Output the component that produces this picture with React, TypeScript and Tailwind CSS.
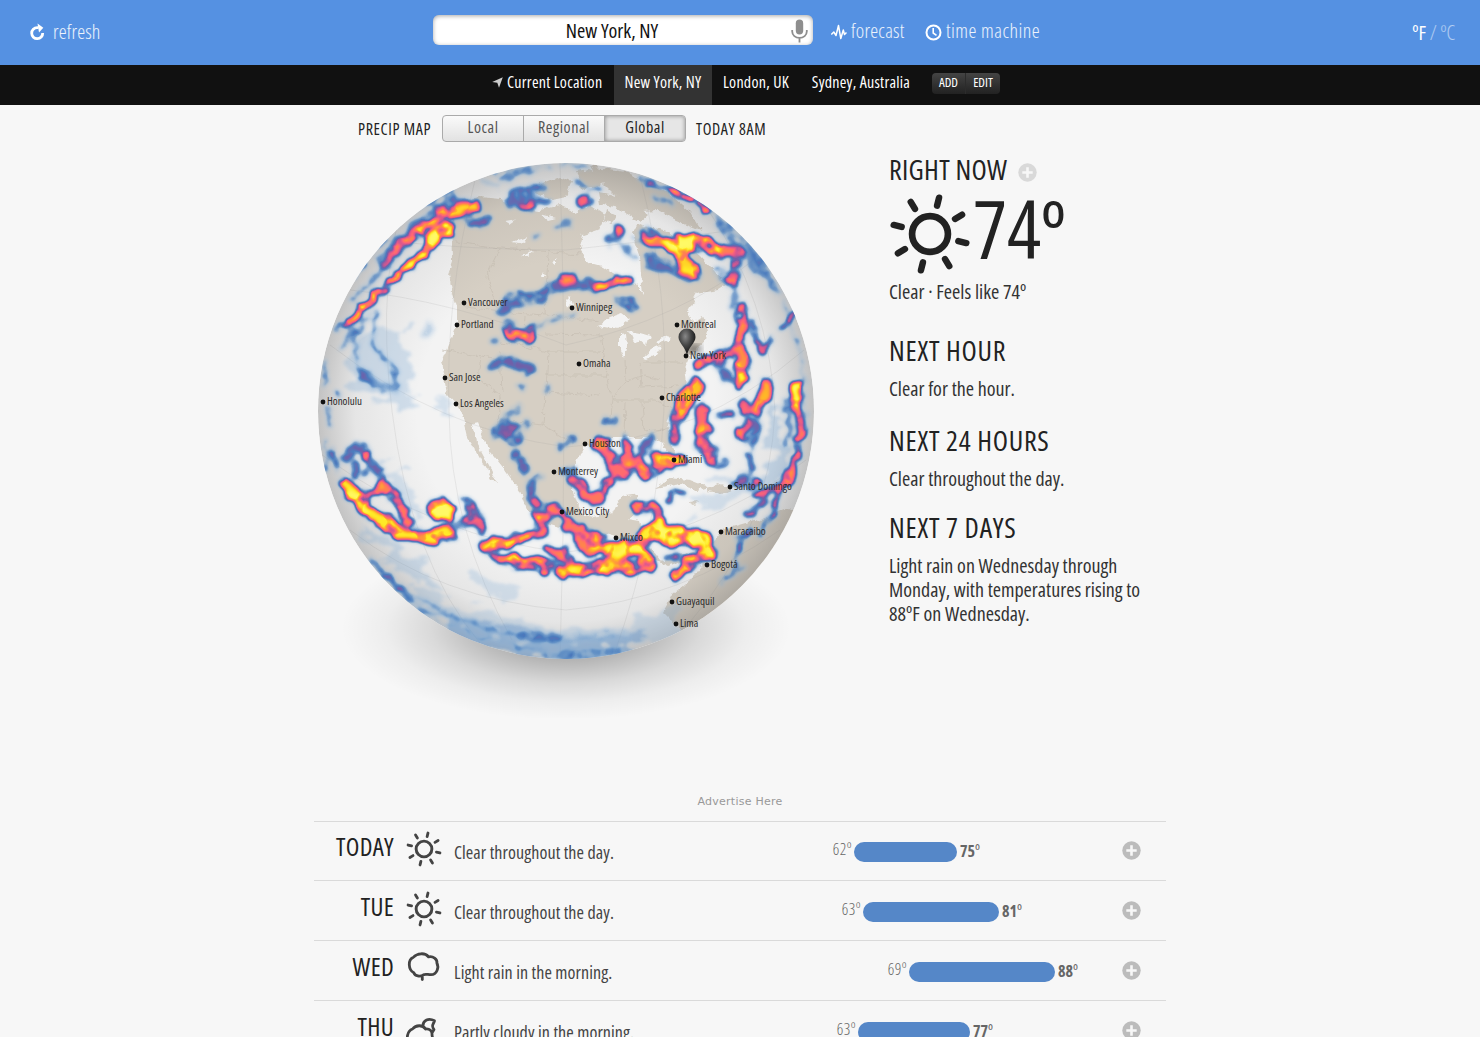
import { Fragment } from "react";
import clsx from "clsx";

type IconName = "clear" | "rain" | "partly-cloudy";

interface IDay {
  name: string;
  icon: IconName;
  summary: string;
  low: number;
  high: number;
  offset: number;
  width: number;
}

// offset and width place the temperature bar inside its 300px track
const days: IDay[] = [
  { name: "TODAY", icon: "clear", summary: "Clear throughout the day.", low: 62, high: 75, offset: 54, width: 103 },
  { name: "TUE", icon: "clear", summary: "Clear throughout the day.", low: 63, high: 81, offset: 63, width: 136 },
  { name: "WED", icon: "rain", summary: "Light rain in the morning.", low: 69, high: 88, offset: 109, width: 146 },
  { name: "THU", icon: "partly-cloudy", summary: "Partly cloudy in the morning.", low: 63, high: 77, offset: 58, width: 112 },
];

const cities: [string, number, number][] = [
  ["Vancouver", 464, 303], ["Portland", 457, 325], ["San Jose", 445, 378], ["Los Angeles", 456, 404],
  ["Honolulu", 323, 402], ["Winnipeg", 572, 308], ["Montreal", 677, 325], ["Omaha", 579, 364],
  ["New York", 686, 356], ["Charlotte", 662, 398], ["Houston", 585, 444], ["Miami", 674, 460],
  ["Monterrey", 554, 472], ["Mexico City", 562, 512], ["Mixco", 616, 538], ["Santo Domingo", 730, 487],
  ["Maracaibo", 721, 532], ["Bogotá", 707, 565], ["Guayaquil", 672, 602], ["Lima", 676, 624],
];

// storm tracks: path, stroke width, intensity
const tracks: [string, number, number][] = [
  // north pacific
  ["M336 331L352 319L385 287Q418 257 436 241", 6, 1],
  ["M432 241Q440 230 449 230", 12, 1],
  ["M385 262Q410 230 440 213Q458 205 474 206", 15, 0.34],
  ["M413 236Q430 219 448 213Q460 206 474 207", 8, 0.78],
  ["M395 250L420 228", 5, 0.74],
  ["M432 207L452 198M400 245L388 258M425 202L450 190", 4, 0.5],
  ["M464 213L474 222L488 222", 8, 0.42],
  ["M384 268L408 240M352 300L380 272", 6, 0.27],
  ["M377 313Q366 345 382 358Q398 368 396 385", 5, 0.32],
  ["M364 318Q350 345 358 370L372 388", 5, 0.28],
  ["M354 325L340 350M372 312L350 340", 4, 0.25],
  ["M425 335L430 325", 7, 0.13],
  ["M362 372L378 385L398 388", 8, 0.2],
  // arctic
  ["M507 203L524 200L545 201M515 194L540 186", 9, 0.36],
  ["M521 206L532 207", 6, 0.6],
  ["M576 184L586 189L600 190", 5, 0.4],
  ["M581 203L588 200", 8, 0.6],
  ["M556 226L570 224M533 238L537 236", 6, 0.26],
  ["M490 172L550 167M500 180L530 170M560 166L590 168", 4, 0.28],
  // canada
  ["M504 309L512 300L535 300L556 288L575 282L600 287", 11, 0.38],
  ["M562 279L573 279", 9, 0.6],
  ["M598 287Q613 279 629 281", 8, 0.92],
  ["M619 297L624 304L634 306", 7, 0.4],
  ["M508 326L515 336L529 333", 12, 0.46],
  ["M510 333L528 335", 7, 0.66],
  ["M530 331L548 320L576 313", 5, 0.24],
  ["M495 364L501 359", 9, 0.38],
  ["M510 359L516 365L530 369", 11, 0.4],
  ["M548 386L548 392M521 386L523 388M493 345L498 342", 5, 0.28],
  ["M610 240L620 233", 10, 0.38],
  ["M617 229L619 230", 8, 0.6],
  ["M630 237L638 243M620 245L636 258", 5, 0.28],
  ["M648 238L670 243Q700 236 722 252L737 254L733 280", 11, 0.68],
  ["M672 245Q690 238 712 247", 14, 0.98],
  ["M680 248L684 262L692 270", 13, 0.86],
  ["M648 260L675 270L695 275", 11, 0.36],
  ["M646 231L650 236", 9, 0.42],
  ["M718 268L733 290L736 312", 7, 0.24],
  // west atlantic
  ["M742 310Q744 330 738 348Q750 360 742 372L738 385", 9, 0.72],
  ["M738 362L740 378", 6, 0.95],
  ["M752 325Q756 345 763 353L770 342", 6, 0.68],
  ["M778 327Q792 325 793 312", 5, 0.64],
  ["M697 365L707 360", 10, 0.72],
  ["M678 416Q686 395 697 386", 14, 0.82],
  ["M674 420L675 440M718 358L728 352", 9, 0.56],
  ["M702 410L704 428L699 438L707 452L712 462", 10, 0.62],
  ["M700 432L706 428", 11, 0.54],
  ["M725 372L728 380M718 366L726 356", 7, 0.38],
  ["M744 405L746 412M757 410L762 398L765 385M741 432L748 424", 9, 0.6],
  ["M754 408L766 395L768 382M723 415L733 418M738 433L740 438", 7, 0.5],
  ["M748 440L754 445L758 422M716 450L717 454M722 463L724 464", 7, 0.38],
  ["M748 455L754 468L745 478L734 484", 7, 0.44],
  ["M794 384L797 403L801 430Q796 462 789 483", 6, 0.7],
  ["M797 385L797 402", 9, 1],
  ["M790 400L787 445M782 412L785 402", 6, 0.3],
  ["M789 470L778 495L773 515M756 498L785 482M750 490L756 482", 6, 0.64],
  ["M748 515L765 500M760 535L770 518M735 540L750 528L740 550", 5, 0.52],
  ["M722 582L745 565M733 568L738 552", 4, 0.38],
  ["M804 390L806 430M782 300Q800 340 806 380", 2.5, 0.35],
  // gulf and caribbean
  ["M598 446L612 460L618 476L636 462L650 474L662 462L678 460", 12, 0.62],
  ["M626 440L627 462M644 468L647 478", 8, 0.62],
  ["M655 455L672 462L682 460", 9, 0.75],
  ["M640 455L650 440", 8, 0.4],
  ["M601 440L605 442", 9, 0.68],
  ["M573 478L582 488L592 500L604 496L607 482", 9, 0.66],
  ["M605 424L614 420M562 446L575 438M562 472L572 470", 7, 0.36],
  ["M668 500Q667 490 682 492", 6, 0.6],
  ["M636 508L655 506L663 525", 8, 0.76],
  // mexico
  ["M498 432L505 425", 10, 0.38],
  ["M508 438L518 438L514 428", 11, 0.42],
  ["M510 414L519 408M526 424L527 426", 7, 0.24],
  ["M514 455L520 455L523 470M531 487L534 502", 9, 0.38],
  ["M536 480L540 478M531 500L548 510", 8, 0.3],
  // tropical belt
  ["M536 515L542 530L532 535L484 546L498 560L522 562", 9, 0.7],
  ["M487 547L508 542L528 538", 8, 0.78],
  ["M515 560L545 566L566 572L600 567", 11, 0.88],
  ["M540 520L558 510L570 525L592 535", 10, 0.66],
  ["M548 550L560 552L572 568M577 540L590 552L602 540", 8, 0.7],
  ["M592 540L612 558L640 548", 10, 0.72],
  ["M612 550L640 544L650 530L674 534L704 540", 14, 0.92],
  ["M602 566L625 568L650 566L642 552", 11, 0.86],
  ["M676 575L686 564L700 556L710 552", 10, 0.88],
  ["M660 524L668 542L700 536", 11, 0.88],
  ["M706 540L712 553", 9, 0.64],
  ["M680 556L668 560", 6, 0.5],
  // central pacific
  ["M347 485L362 507L385 522L402 535L425 538L450 533", 11, 0.9],
  ["M354 497L366 500L362 492L378 494L382 478", 7, 0.7],
  ["M350 495L366 510", 8, 0.86],
  ["M385 488L398 502L410 523", 8, 0.68],
  ["M439 508L447 512", 17, 1],
  ["M450 526L468 524", 9, 0.26],
  ["M466 501L474 514L482 530M470 520L478 518", 8, 0.58],
  ["M348 458L353 447L364 450L371 463L380 474", 7, 0.4],
  ["M355 464L355 473M365 453L367 459", 6, 0.5],
  ["M365 473L365 474", 7, 0.36],
  ["M333 453L339 472M329 405L331 422", 5, 0.54],
  ["M325 440L328 470", 2.5, 0.5],
  ["M337 390L338 396M326 360L324 385", 3, 0.46],
  // southern rim and limb
  ["M372 560L415 605", 3, 0.52],
  ["M398 585Q440 615 500 632L560 640", 5, 0.24],
  ["M420 610Q480 645 560 652L620 650", 4, 0.28],
  ["M520 635L560 640L625 634", 10, 0.14],
  ["M540 657L600 657", 3, 0.4],
  ["M640 180L667 190", 4, 0.7],
  ["M670 189Q690 197 707 210", 5, 0.95],
  ["M710 212Q745 236 768 272", 5, 0.34],
  ["M720 226L772 285M750 262L778 292", 6, 0.3],
  ["M656 197L672 204", 5, 0.28],
  ["M356 274Q390 222 440 190", 2.5, 0.56],
];

// wide light-blue drizzle
const drizzle: [string, number][] = [
  ["M378 328L400 330L412 352L408 385L420 400L395 412L350 385L355 340Z", 0.11],
  ["M385 455L400 470L410 490L425 505L420 515L400 500L388 480Z", 0.1],
  ["M355 525L385 540L410 550L425 565L440 590L420 590L390 565Z", 0.11],
  ["M475 575L500 582L515 590L505 600L480 592Z", 0.1],
  ["M395 585L450 600L520 622L600 628L650 612L690 605L680 640L560 665L450 640Z", 0.1],
  ["M430 610L500 632L600 640L650 628L640 650L560 665L450 640Z", 0.07],
  ["M700 490L730 480L748 490L720 508L690 515Z", 0.1],
  ["M770 415L785 410L787 470L765 500L745 495L765 465Z", 0.12],
  ["M480 180L500 183L498 195L480 190Z", 0.11],
  ["M440 395L448 403L445 412L432 405Z", 0.1],
];

const land = [
  // north america
  "M452 212L462 200L480 197L500 199L515 207L540 210L560 205L575 212L590 205L605 215L598 230L583 235L580 248L588 262L602 266L622 280L636 284L643 294L641 275L640 255L632 232L640 224L650 228L668 232L682 240L700 255L712 268L726 285L718 290L697 294L688 311L692 322L702 316L707 330L705 342L690 355L685 368L687 385L674 408L667 424L674 450L672 460L663 444L653 437L613 437L593 440L580 453L575 467L573 490L580 513L593 517L613 513L620 498L640 495L636 513L628 520L640 522L645 540L660 560L672 556L693 552L712 560L704 566L690 558L668 566L650 557L627 544L610 535L583 532L557 527L540 522L527 510L520 492L505 470L487 447L478 423L473 424L477 443L490 467L498 483L491 479L477 453L467 437L462 415L457 405L448 395L442 362L457 325L457 307L452 292L449 274L453 262Z",
  // arctic islands
  "M540 184L560 176L572 182L566 196L548 200L536 194ZM575 172L590 170L604 176L600 188L584 190ZM598 192L622 196L648 215L640 222L618 208L600 204ZM606 210L616 215L612 224L604 220Z",
  // greenland
  "M590 166L625 172L665 190L690 212L701 230L676 220L658 210L640 211L612 192L600 180Z",
  // caribbean
  "M655 488L670 478L690 480L708 487L698 490L680 484ZM706 488L718 483L734 488L722 495L708 492ZM688 502L698 501L694 505Z",
  // south america
  "M704 562L712 545L722 530L742 524L768 517L790 508L800 520L770 590L720 630L684 634L672 621L663 612L673 594L690 580Z",
];

const water = [
  "M598 327L610 317L622 313L630 319L618 328L606 326Z",
  "M620 335L626 334L627 348L624 358L620 350Z",
  "M629 331L640 333L650 336L647 346L640 340L634 342Z",
  "M643 358L652 350L661 346L656 354L646 359Z",
  "M656 342L668 336L671 339L660 344Z",
  "M505 221L517 219L510 224ZM512 242L528 237L524 244ZM520 256L534 251L528 256ZM541 277L543 272L545 277ZM552 263L556 258L556 266ZM566 300L570 296L573 306L568 308ZM540 214L556 218L548 220Z",
];

const borders =
  "M460 306L500 312L560 316L598 322M456 242L500 248L580 254M500 249L487 275L498 311M548 253L545 315M525 316L523 345L500 342M523 346L548 352L600 352M545 334L600 335M548 352L546 392L600 395M545 375L610 375M600 335L606 375L612 400L609 425M442 350L480 356L477 378L500 395L498 424M500 352L502 392M480 356L523 362M545 392L543 425L500 420M543 425L575 445M625 360L626 382L612 398M640 362L642 388L680 386M612 400L655 400L672 408M625 402L624 436M642 402L644 430L664 428M626 382L645 376L660 380M645 362L684 362M690 340L692 320";

const graticule =
  "M410 187Q375 270 392 411Q410 560 480 643M475 180Q445 300 449 411Q450 530 512 640M560 163Q568 411 560 659M640 176Q700 411 615 652M705 205Q770 300 775 411Q770 530 690 622M330 345Q440 430 566 447Q700 440 804 350M350 290Q450 300 566 345Q680 320 760 255M322 455Q440 540 566 552Q700 540 806 460M350 530Q440 600 566 610Q680 600 780 530M380 240Q470 250 566 250Q660 240 735 230";

const Storms = () => (
  <Fragment>
    <g filter="url(#precip-soft)">
      {drizzle.map(([d, level]) => (
        <path key={d} d={d} fill="#fff" fillOpacity={level} />
      ))}
    </g>
    <g filter="url(#precip)" fill="none" stroke="#fff" strokeLinecap="round" strokeLinejoin="round">
      {tracks.map(([d, width, level]) => (
        <path key={d} d={d} strokeWidth={width > 6 ? width + 1.5 : width} strokeOpacity={level} />
      ))}
    </g>
  </Fragment>
);

// maps rain intensity (alpha) to the blue / pink / yellow scale
const ColorScale = () => (
  <Fragment>
    <feColorMatrix type="matrix" values="0 0 0 1 0  0 0 0 1 0  0 0 0 1 0  0 0 0 1 0" />
    <feComponentTransfer>
      <feFuncR type="table" tableValues="0.6 0.5 0.32 0.27 0.45 0.85 1 1 1 1 1" />
      <feFuncG type="table" tableValues="0.75 0.68 0.53 0.47 0.37 0.34 0.4 0.52 0.72 0.92 0.98" />
      <feFuncB type="table" tableValues="0.9 0.85 0.77 0.74 0.66 0.56 0.46 0.3 0.15 0.15 0.4" />
      <feFuncA type="table" tableValues="0 0.25 0.7 0.95 1 1 1 1 1 1 1" />
    </feComponentTransfer>
  </Fragment>
);

const Globe = () => (
  <svg width="504" height="576" viewBox="314 142 504 576" className="block" colorInterpolationFilters="sRGB">
    <defs>
      <clipPath id="disc">
        <circle cx="566" cy="411" r="248" />
      </clipPath>
      <radialGradient id="shade" cx="0.5" cy="0.5" r="0.5">
        <stop offset="0.6" stopColor="#6b6b6b" stopOpacity="0" />
        <stop offset="0.85" stopColor="#6b6b6b" stopOpacity="0.1" />
        <stop offset="1" stopColor="#5c5c5c" stopOpacity="0.32" />
      </radialGradient>
      <radialGradient id="shadow">
        <stop offset="0" stopColor="#000" stopOpacity="0.4" />
        <stop offset="0.3" stopColor="#000" stopOpacity="0.3" />
        <stop offset="0.6" stopColor="#000" stopOpacity="0.12" />
        <stop offset="0.8" stopColor="#000" stopOpacity="0.04" />
        <stop offset="1" stopColor="#000" stopOpacity="0" />
      </radialGradient>
      <radialGradient id="pin" cx="0.4" cy="0.3" r="0.7">
        <stop offset="0" stopColor="#888" />
        <stop offset="0.5" stopColor="#444" />
        <stop offset="1" stopColor="#111" />
      </radialGradient>
      <filter id="precip" filterUnits="userSpaceOnUse" x="300" y="150" width="530" height="530">
        <feTurbulence type="fractalNoise" baseFrequency="0.08" numOctaves="3" seed="4" result="noise" />
        <feDisplacementMap in="SourceGraphic" in2="noise" scale="13" xChannelSelector="R" yChannelSelector="G" />
        <feGaussianBlur stdDeviation="1.9" result="rain" />
        <feTurbulence type="fractalNoise" baseFrequency="0.075" numOctaves="2" seed="11" />
        <feColorMatrix type="matrix" values="0 0 0 0 1  0 0 0 0 1  0 0 0 0 1  1.7 0 0 0 0.08" result="cells" />
        <feComposite in="rain" in2="cells" operator="in" />
        <ColorScale />
      </filter>
      <filter id="precip-soft" filterUnits="userSpaceOnUse" x="300" y="150" width="530" height="530">
        <feTurbulence type="fractalNoise" baseFrequency="0.03 0.06" numOctaves="4" seed="9" result="noise" />
        <feDisplacementMap in="SourceGraphic" in2="noise" scale="40" xChannelSelector="R" yChannelSelector="G" />
        <feGaussianBlur stdDeviation="1.5" />
        <ColorScale />
      </filter>
      <filter id="coast" filterUnits="userSpaceOnUse" x="300" y="150" width="530" height="530">
        <feTurbulence type="fractalNoise" baseFrequency="0.12" numOctaves="3" seed="2" result="noise" />
        <feDisplacementMap in="SourceGraphic" in2="noise" scale="7" xChannelSelector="R" yChannelSelector="G" />
      </filter>
      <filter id="soft"><feGaussianBlur stdDeviation="3" /></filter>
    </defs>
    <ellipse cx="566" cy="628" rx="225" ry="92" fill="url(#shadow)" />
    <circle cx="566" cy="411" r="248" fill="#f3f3f3" />
    <g clipPath="url(#disc)">
      <g filter="url(#coast)">
        {land.map((d) => <path key={d} d={d} fill="#d6cfc4" />)}
        {water.map((d) => <path key={d} d={d} fill="#f3f3f3" />)}
        <path d={borders} fill="none" stroke="#c4bcb0" strokeWidth="0.6" />
      </g>
      <path d={graticule} fill="none" stroke="#999" strokeOpacity="0.2" strokeWidth="0.8" />
      <circle cx="566" cy="411" r="248" fill="url(#shade)" />
      <Storms />
    </g>
    <ellipse cx="694" cy="349" rx="8" ry="5" fill="#000" fillOpacity="0.4" filter="url(#soft)" />
    {cities.map(([name, x, y]) => (
      <g key={name}>
        <circle cx={x} cy={y} r="2.4" fill="#111" />
        <text x={x + 4} y={y + 3.2} className="text-[11px] font-stretch-[75%]" fill="#2b2b2b">{name}</text>
      </g>
    ))}
    <path d="M687 355C685 346 678.500 343 678.500 337A8.500 8.500 0 0 1 695.500 337C695.500 343 689 346 687 355Z" fill="url(#pin)" />
  </svg>
);

const Sun = ({ size }: { size: number }) => (
  <svg width={size} height={size} viewBox="-40 -40 80 80" fill="none" stroke="currentColor" strokeLinecap="round" className="shrink-0">
    <circle r="17.500" strokeWidth="6.500" />
    {[14, 59, 104, 149, 194, 239, 284, 329].map((angle) => (
      <path key={angle} d="M0 -28.500V-36.500" strokeWidth="6.300" transform={`rotate(${angle})`} />
    ))}
  </svg>
);

const WeatherIcon = ({ name }: { name: IconName }) => {
  if (name === "clear") return <Sun size={36} />;
  return (
    <svg width="36" height="36" viewBox="0 0 36 36" fill="none" stroke="currentColor" strokeWidth="2.800" strokeLinejoin="round" strokeLinecap="round">
      {name === "rain" ? (
        <Fragment>
          <path d="M7.500 6.200C11 2.200 19 1.200 22.500 5.800C27 4.800 31.500 8 30.900 12C33.200 16.500 31 23.500 25 23.700C22 23.800 19.500 22.600 17.500 23.800C14 26.200 9 25 7.800 21.700C2.200 19 1.500 8.500 7.500 6.200Z" />
          <path d="M16.300 26.500V28.500" />
        </Fragment>
      ) : (
        <Fragment>
          <path d="M3 32C0 28 1 20 6.500 18C10 13.500 17 13.800 19.500 18C23.500 17.500 26.500 20 26 24C27.500 30 25 33 20 34H6Z" />
          <path d="M17 14.500C17 9.500 22.500 6.500 28.500 9.800C27.500 13.200 24.800 14.500 28 18.500L26.500 21" />
        </Fragment>
      )}
    </svg>
  );
};

const PlusButton = ({ className }: { className?: string }) => (
  <svg width="19" height="19" viewBox="0 0 19 19" className={className}>
    <circle cx="9.500" cy="9.500" r="9.200" fill="currentColor" />
    <path d="M9.500 4.300V14.700M4.300 9.500H14.700" stroke="#f7f7f7" strokeWidth="2.600" />
  </svg>
);

const Header = () => (
  <header className="h-[65px] bg-[#5591e2] text-xl text-white/90 flex items-start">
    <div className="w-[433px] pl-[29px] pt-[18px] flex items-center leading-7">
      <svg width="17" height="18" viewBox="0 0 17 18" className="mr-[7px] text-white">
        <path d="M13.700 10A5.500 5.500 0 1 1 8.200 4.700H9.500" fill="none" stroke="currentColor" strokeWidth="2.800" />
        <path d="M8.500 0.600L14.300 4.800L10 9.600Z" fill="currentColor" />
      </svg>
      <span className="font-light tracking-[0.15px]">refresh</span>
    </div>
    <div className="mt-[15px] w-[380px] h-[30px] rounded-md bg-white shadow-[inset_0_1px_4px_rgba(0,0,0,0.35)] flex items-center text-[#111]">
      <span className="flex-1 text-center leading-[30px] pt-0.5">New York, NY</span>
      <svg width="17" height="24" viewBox="0 0 17 24" className="mr-[5px] mt-0.5">
        <rect x="4.800" y="0.500" width="7.400" height="15" rx="3.700" fill="#8e8e8e" />
        <path d="M1.200 11V12.500A7 6.200 0 0 0 15.800 12.500V11M8.500 18.500V23.500" fill="none" stroke="#8e8e8e" strokeWidth="1.800" />
      </svg>
    </div>
    <nav className="pl-[18px] pt-[17px] flex items-center font-light leading-7">
      <svg width="16" height="16" viewBox="0 0 16 16" fill="none" stroke="#fff" strokeWidth="1.500" strokeLinejoin="round" className="mt-0.5">
        <path d="M0.300 10.500L2.800 8L5 11.500L7.500 1.500L9.800 14.500L12.300 6L13.500 10.500L15.500 8.500" />
      </svg>
      <span className="ml-1 w-[54px] tracking-[0.25px]">forecast</span>
      <svg width="17" height="17" viewBox="0 0 17 17" fill="none" stroke="#fff" className="ml-5 mt-0.5">
        <circle cx="8.500" cy="8.500" r="7" strokeWidth="2" />
        <path d="M8.200 4V9L11.500 11.300" strokeWidth="1.600" />
      </svg>
      <span className="ml-1 tracking-[0.48px]">time machine</span>
    </nav>
    <div className="ml-auto pr-[25px] pt-[19px] leading-7 text-white/55 font-light">
      <span className="text-white font-normal">ºF</span> / ºC
    </div>
  </header>
);

const LocationBar = () => (
  <div className="h-10 bg-[#111] pl-[482px] flex text-[16px] tracking-[0.25px] font-medium leading-[34px] text-white whitespace-nowrap">
    <span className="px-2.5 w-[132px] flex items-start">
      <svg width="11" height="11" viewBox="0 0 11 11" className="mr-1 mt-3 shrink-0">
        <path d="M10.800 0.200L7 10.800L5.300 5.800L0.200 5Z" fill="#ccc" />
      </svg>
      Current Location
    </span>
    <span className="w-[98px] text-center bg-[#333]">New York, NY</span>
    <span className="w-[88px] text-center">London, UK</span>
    <span className="w-[122px] text-center">Sydney, Australia</span>
    <div className="ml-2.5 mt-[8px] h-[21px] w-[68px] rounded bg-linear-to-b from-[#444] to-[#222] flex text-[13px] leading-[19px] font-normal tracking-normal">
      <span className="w-[34px] text-center border-r border-[#2c2c2c]">ADD</span>
      <span className="flex-1 text-center">EDIT</span>
    </div>
  </div>
);

const MapTabs = () => (
  <div className="pt-2.5 pl-11 h-[37px] flex text-base text-[#222] whitespace-nowrap">
    <span className="w-[84px] leading-[29px] tracking-[0.65px]">PRECIP MAP</span>
    <div className="w-[244px] flex rounded border border-[#aaa] bg-linear-to-b from-[#fafafa] to-[#e2e2e2] leading-[22px] text-[#555] overflow-hidden">
      {["Local", "Regional", "Global"].map((tab) => (
        <span
          key={tab}
          className={clsx(
            "flex-1 text-center tracking-[0.55px]",
            tab === "Global" ? "bg-[#e6e6e6] text-[#222] shadow-[inset_0_0_4px_rgba(0,0,0,0.4)]" : "border-r border-[#aaa]"
          )}
        >
          {tab}
        </span>
      ))}
    </div>
    <span className="ml-2.5 leading-[29px] tracking-[0.65px]">TODAY 8AM</span>
  </div>
);

const Section = ({ title, text, className }: { title: string; text: string; className?: string }) => (
  <section className={className}>
    <h2 className="text-[28px] leading-[38px] font-medium tracking-[0.7px]">{title}</h2>
    <p className="mt-[8px] text-xl leading-6 w-[262px] text-[#333]">{text}</p>
  </section>
);

const Conditions = () => (
  <div className="ml-[71px] pt-[45px] text-[#222]">
    <h2 className="text-[28px] leading-[38px] flex items-center font-medium tracking-[0.3px]">
      RIGHT NOW
      <PlusButton className="ml-[11px] mt-1.5 text-[#d9d9d9]" />
    </h2>
    <div className="h-[92px] flex items-center">
      <Sun size={82} />
      <span className="ml-0.5 text-[80px] leading-none font-medium -mt-3">74º</span>
    </div>
    <p className="text-xl leading-6 text-[#333]">Clear · Feels like 74º</p>
    <Section className="mt-[27px]" title="NEXT HOUR" text="Clear for the hour." />
    <Section className="mt-[20px]" title="NEXT 24 HOURS" text="Clear throughout the day." />
    <Section className="mt-[17px]" title="NEXT 7 DAYS" text="Light rain on Wednesday through Monday, with temperatures rising to 88ºF on Wednesday." />
  </div>
);

const DayRow = ({ day }: { day: IDay }) => (
  <li className="h-[59px] mb-px border-b border-[#dadada] flex items-start text-[#444]">
    <span className="w-20 text-right text-[25px] leading-[48px] text-[#222] tracking-[0.3px]">{day.name}</span>
    <span className="ml-3 mt-[9px] w-12"><WeatherIcon name={day.icon} /></span>
    <span className="w-[346px] text-lg leading-[60px] tracking-[0.08px]">{day.summary}</span>
    <div className="w-[300px] flex items-start text-[#666]">
      <span className="text-right text-base leading-[54px] pr-0.5 tracking-[0.5px] font-light" style={{ width: day.offset }}>{day.low}º</span>
      <span className="mt-5 h-5 rounded-full bg-[#5587c8]" style={{ width: day.width }} />
      <span className="ml-[3px] text-base leading-[58px] font-bold">{day.high}<span className="font-normal">º</span></span>
    </div>
    <PlusButton className="mt-[19px] ml-[21.500px] text-[#bcbcbc]" />
  </li>
);

export default function App() {
  return (
    <div className="h-[1037px] overflow-hidden bg-[#f7f7f7] font-['Open_Sans',sans-serif] font-stretch-[75%]">
      <Header />
      <LocationBar />
      <main className="w-[852px] mx-auto">
        <div className="flex h-[687px]">
          <div className="w-[504px]">
            <MapTabs />
            <Globe />
          </div>
          <Conditions />
        </div>
        <p className="h-[29px] text-center text-[11px] leading-[19px] tracking-[0.25px] font-stretch-[100%] text-[#999] font-['DejaVu_Sans',sans-serif]">Advertise Here</p>
        <ul className="border-t border-[#dadada]">
          {days.map((day) => <DayRow key={day.name} day={day} />)}
        </ul>
      </main>
    </div>
  );
}
